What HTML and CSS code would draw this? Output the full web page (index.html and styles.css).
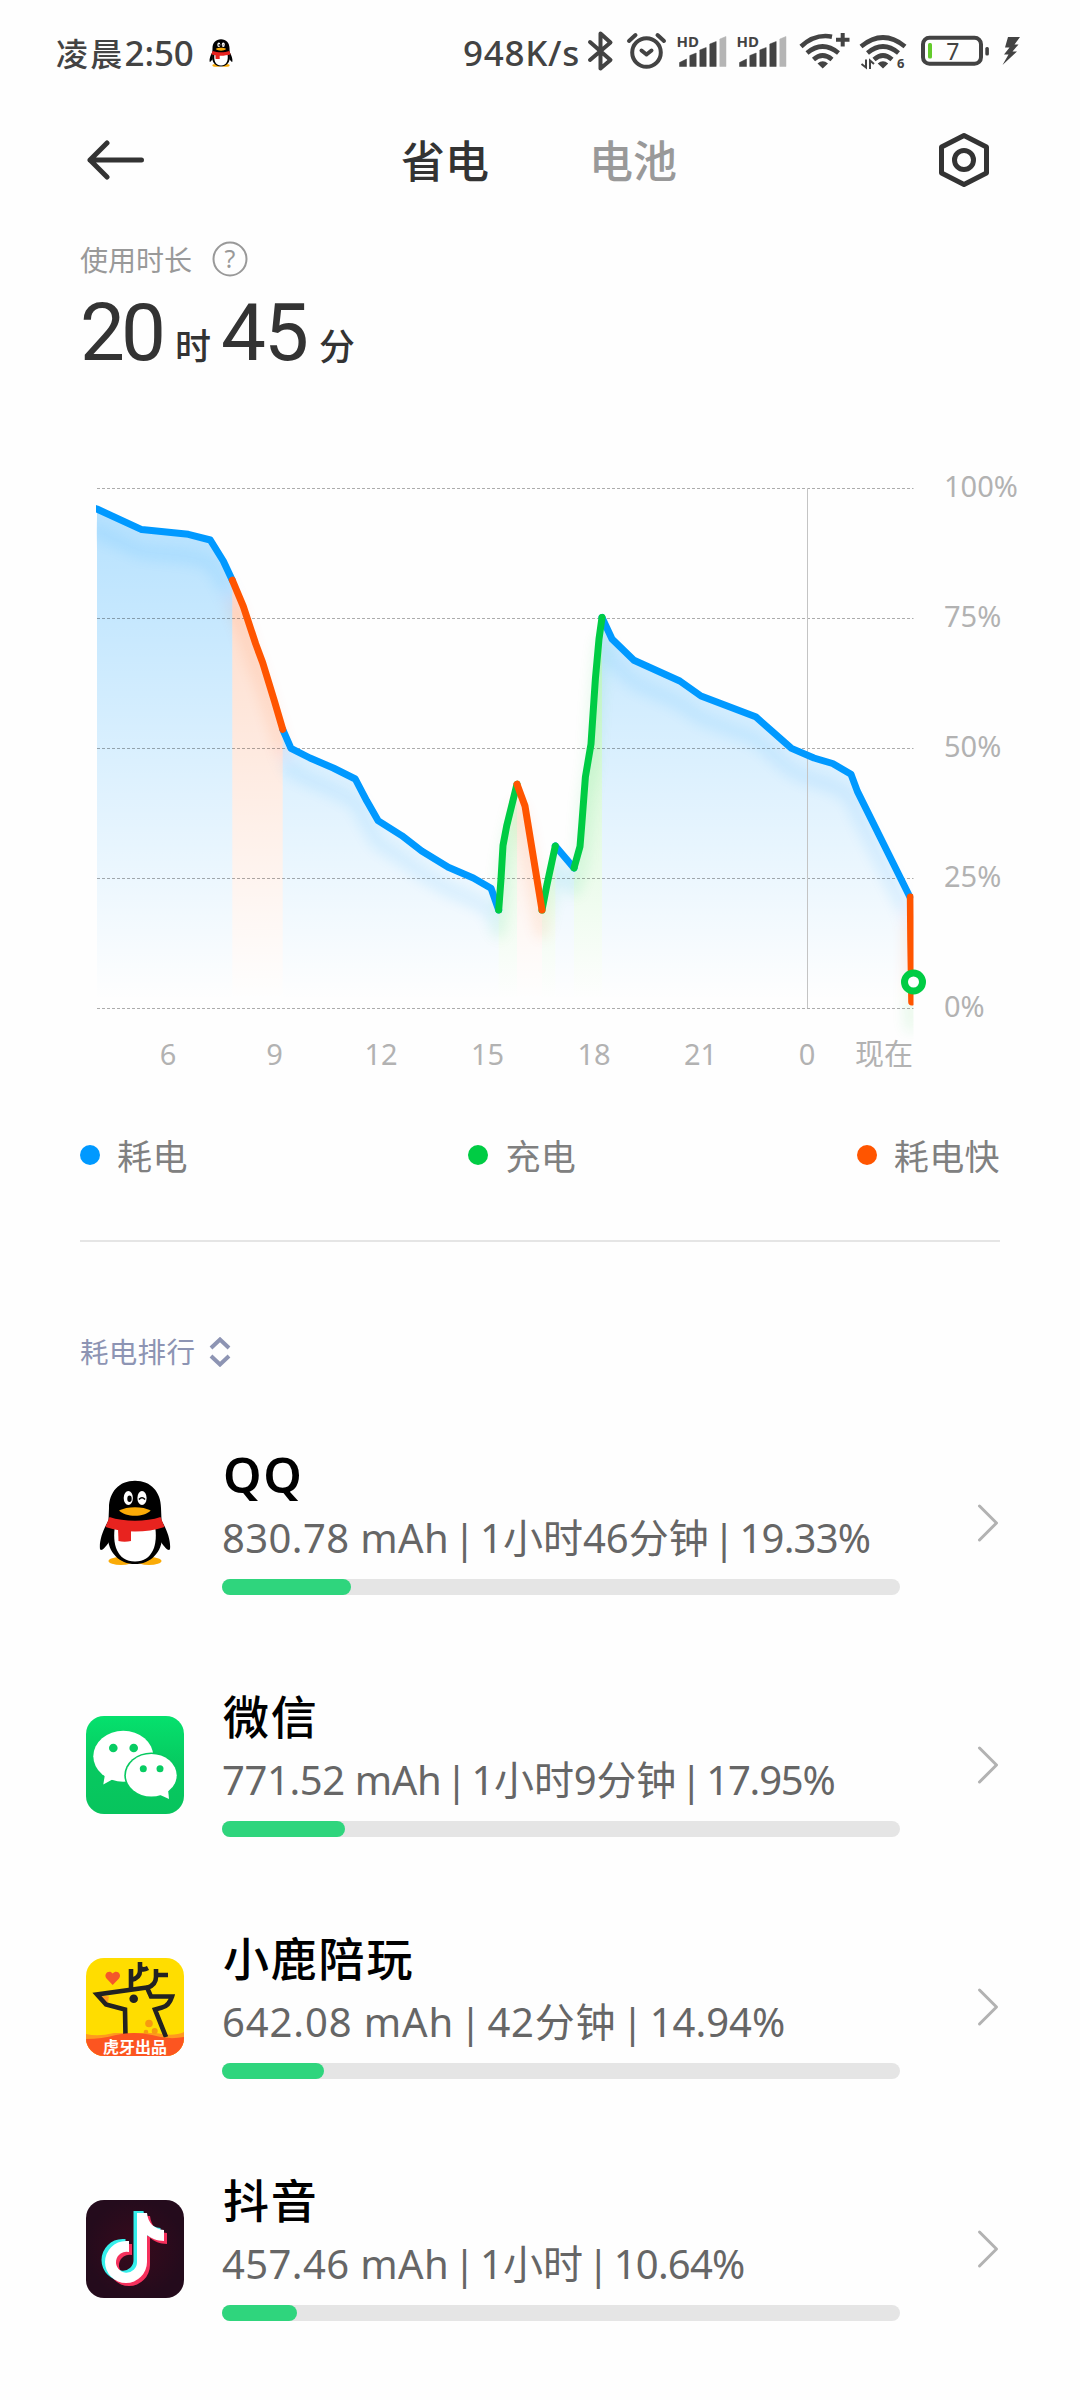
FILE: index.html
```html
<!DOCTYPE html>
<html lang="zh-CN">
<head>
    <meta charset="UTF-8">
    <meta name="viewport" content="width=device-width, initial-scale=1.0">
    <title>省电</title>
    <link rel="stylesheet" href="styles.css">
</head>
<body>
    <!-- shared shapes -->
    <svg class="defs" width="0" height="0">
        <symbol id="penguin" viewBox="0 0 98 98">
            <ellipse cx="35" cy="87" rx="12.5" ry="4" fill="#faab07"/>
            <ellipse cx="63" cy="87" rx="12.5" ry="4" fill="#faab07"/>
            <path d="M24 44C17 55 13 67 14 75C15 78 19 74 23 68ZM74 44C81 55 85 67 84 75C83 78 79 74 75 68Z" fill="#000"/>
            <path d="M49 6.7C33 6.7 23 18 23 34L22 58C20 76 32 90 49 90C66 90 78 76 76 58L75 34C75 18 65 6.7 49 6.7Z" fill="#000"/>
            <path d="M29 52C26 70 31 87.5 49 87.5C67 87.5 72 70 69 52Z" fill="#fff"/>
            <path d="M23.500 43C38 48 60 48 74.500 43L78.500 53C60 59 38 59 19.500 53Z" fill="#e8231f"/>
            <path d="M32 54H45V67C41 68 36 68 32.500 67Z" fill="#e8231f"/>
            <ellipse cx="42.300" cy="24" rx="4.600" ry="7" fill="#fff"/>
            <ellipse cx="56" cy="24" rx="4.600" ry="7" fill="#fff"/>
            <ellipse cx="43.500" cy="24.800" rx="2.200" ry="3.200" fill="#000"/>
            <path d="M53 25.500Q56 22 59 25.500" fill="none" stroke="#000" stroke-width="1.600"/>
            <path d="M33 36.500C41 32 57 32 64.700 36.500C58 43.500 40 43.500 33 36.500Z" fill="#faab07"/>
        </symbol>
        <symbol id="signal" viewBox="0 0 60 48">
            <path d="M2.500 37.500V33.500L9.500 30V37.500ZM12.800 37.500V26.500L19.200 24V37.500ZM22.800 37.500V21L29.200 18.500V37.500ZM32.800 37.500V15L39.200 12.500V37.500Z" fill="#434343" stroke="#434343" stroke-width=".5" stroke-linejoin="round"/>
            <path d="M42.800 37.500V10L49 7.500V37.500Z" fill="#b5b5b5" stroke="#b5b5b5" stroke-width=".5" stroke-linejoin="round"/>
        </symbol>
        <symbol id="chevron" viewBox="0 0 24 42">
            <path d="M3.500 4L20.500 21L3.500 38" fill="none" stroke="#b2b2b2" stroke-width="3" stroke-linecap="round" stroke-linejoin="round"/>
        </symbol>
    </svg>

    <div class="status-bar">
        <div class="clock"><span class="clock-cn">凌晨</span>2:50</div>
        <svg class="status-qq" width="32" height="32"><use href="#penguin"/></svg>
        <div class="speed">948K/s</div>
        <svg class="status-icons" width="448" height="48" viewBox="582 30 448 48">
            <!-- bluetooth -->
            <path d="M590 43L610.500 61L600.500 69.500V34.500L610.500 43.500L590 61" fill="none" stroke="#434343" stroke-width="4" stroke-linecap="round" stroke-linejoin="round"/>
            <!-- alarm -->
            <g fill="none" stroke="#434343" stroke-width="4" stroke-linecap="round" stroke-linejoin="round">
                <circle cx="646.500" cy="53.500" r="14.300"/>
                <path d="M629 42L635.500 36M664 42L657.500 36M641.500 51.500L646.500 55.500L651.500 51.500"/>
            </g>
            <use href="#signal" x="677" y="30" width="60" height="48"/>
            <use href="#signal" x="737" y="30" width="60" height="48"/>
            <text x="676.500" y="47.700" class="hd">HD</text>
            <text x="736.500" y="47.700" class="hd">HD</text>
            <!-- wifi -->
            <g fill="none" stroke="#434343" stroke-width="4.600">
                <path d="M801 47.500Q815 34.500 832 37.700M807 54Q822.500 41 838.500 54M813.500 60.500Q822.500 52.500 832 60.500"/>
                <path d="M842.700 34V47.500M836 40.700H849.500" stroke-width="4"/>
                <path d="M861 47.500Q883 29.500 905 47.500M867.500 54Q883 41 898.500 54M874 60.500Q883 52.500 892 60.500"/>
                <path d="M866 60.500V68.500L861.500 65M870 70V61.500L874 65" stroke-width="2"/>
            </g>
            <path d="M817.500 64.500Q822.700 60 828 64.500L822.700 69.500ZM877.700 64.500Q883 60 888.200 64.500L883 69.500Z" fill="#434343"/>
            <text x="897" y="69" class="wifi-six">6</text>
            <!-- battery -->
            <rect x="923" y="38.700" width="58" height="26" rx="6.500" fill="none" stroke="#434343" stroke-width="4"/>
            <rect x="985.300" y="48" width="3.600" height="8.600" rx="1.500" fill="#434343"/>
            <rect x="928" y="44" width="4" height="15.500" rx="1.500" fill="#63cb2b"/>
            <text x="952.800" y="60.500" class="battery-text">7</text>
            <path d="M1008 38H1020L1014.500 45.500H1018.500L1012.500 52.500H1017L1002.500 66L1008.500 55.500H1004L1009.500 48.500H1005Z" fill="#434343"/>
        </svg>
    </div>

    <div class="header">
        <svg width="60" height="44" viewBox="0 0 60 44" fill="none" stroke="#333" stroke-width="5" stroke-linecap="round" stroke-linejoin="round">
            <path d="M54.500 22H3M20 5L3 22L20 39"/>
        </svg>
        <div class="tabs">
            <span class="tab active">省电</span>
            <span class="tab">电池</span>
        </div>
        <svg width="54" height="58" viewBox="0 0 54 58" fill="none" stroke="#333" stroke-width="5" stroke-linejoin="round">
            <path d="M27 4.500L49.500 16V42L27 53.500L4.500 42V16Z"/>
            <circle cx="27" cy="29" r="9.500"/>
        </svg>
    </div>

    <div class="usage">
        <div class="usage-label">
            <span>使用时长</span>
            <svg width="36" height="36" viewBox="0 0 36 36">
                <circle cx="18" cy="18" r="16.500" fill="none" stroke="#999" stroke-width="2"/>
                <text x="18" y="27" class="help">?</text>
            </svg>
        </div>
        <div class="usage-time">
            <span class="num hours">20</span><span class="unit">时</span><span class="num minutes">45</span><span class="unit">分</span>
        </div>
    </div>

    <svg class="chart" width="960" height="630" viewBox="80 460 960 630">
        <defs>
            <linearGradient id="fillBlue" gradientUnits="userSpaceOnUse" x1="0" y1="500" x2="0" y2="1000">
                <stop offset="0" stop-color="#0099ff" stop-opacity=".29"/>
                <stop offset="1" stop-color="#0099ff" stop-opacity="0"/>
            </linearGradient>
            <linearGradient id="fillRed" gradientUnits="userSpaceOnUse" x1="0" y1="500" x2="0" y2="1000">
                <stop offset="0" stop-color="#ff5500" stop-opacity=".24"/>
                <stop offset="1" stop-color="#ff5500" stop-opacity="0"/>
            </linearGradient>
            <linearGradient id="fillGreen" gradientUnits="userSpaceOnUse" x1="0" y1="500" x2="0" y2="1000">
                <stop offset="0" stop-color="#22dd22" stop-opacity=".34"/>
                <stop offset="1" stop-color="#22dd22" stop-opacity="0"/>
            </linearGradient>
            <filter id="soft" filterUnits="userSpaceOnUse" x="80" y="470" width="960" height="620">
                <feGaussianBlur stdDeviation="7"/>
            </filter>
            <clipPath id="plot"><rect x="96" y="480" width="817.500" height="580"/></clipPath>
            <g id="line">
                <path stroke="#0099ff" d="M94 508L97 509L141.700 529.600L188.300 534.300L210.300 540L223.300 561L232.300 580.200"/>
                <path stroke="#0099ff" d="M282.700 729.300L291 748.300L310 758L333.300 768L355.300 779L366.700 800.800L378 820.600L401.700 835.600L421.700 851L448.300 867.300L473.300 878L491 888.200L498.700 910"/>
                <path stroke="#0099ff" d="M555.300 846L574 868"/>
                <path stroke="#0099ff" d="M602 617.500L612 639L633.900 660.200L679.800 681L701 696L755.600 716.700L791.500 748.400L814 758L832.600 763.500L851 774.200L857.400 791.400L889.900 856.800L909.900 897"/>
                <path stroke="#00cc44" d="M498.700 910L501 879L503 845.500L506.700 825.800L517 784.200M542 910L546.700 886L555.300 846M574 868L580 846.500L582 821.700L585.400 777L591 744L595.400 678.800L599 639L602 617.500"/>
                <path stroke="#ff5500" d="M232.300 580.200L243.300 606.300L255.700 643.900L262.700 662.800L274.700 702L282.700 729.300M517 784.200L525 806L542 910M910.300 897L910.700 940L911.700 1002"/>
            </g>
        </defs>

        <path fill="url(#fillBlue)" d="M97 1008V509L141.700 529.600L188.300 534.300L210.300 540L223.300 561L232.300 580.200V1008Z"/>
        <path fill="url(#fillRed)" d="M232.300 1008V580.200L243.300 606.300L255.700 643.900L262.700 662.800L274.700 702L282.700 729.300V1008Z"/>
        <path fill="url(#fillBlue)" d="M282.700 1008V729.300L291 748.300L310 758L333.300 768L355.300 779L366.700 800.800L378 820.600L401.700 835.600L421.700 851L448.300 867.300L473.300 878L491 888.200L498.700 910V1008Z"/>
        <path fill="url(#fillGreen)" d="M498.700 1008V910L503 845.500L506.700 825.800L517 784.200V1008Z"/>
        <path fill="url(#fillRed)" d="M517 1008V784.200L525 806L542 910V1008Z"/>
        <path fill="url(#fillGreen)" d="M542 1008V910L555.300 846V1008Z"/>
        <path fill="url(#fillBlue)" d="M555.300 1008V846L574 868V1008Z"/>
        <path fill="url(#fillGreen)" d="M574 1008V868L580 846.500L585.400 777L591 744L595.400 678.800L602 617.500V1008Z"/>
        <path fill="url(#fillBlue)" d="M602 1008V617.500L612 639L633.900 660.200L679.800 681L701 696L755.600 716.700L791.500 748.400L814 758L832.600 763.500L851 774.200L857.400 791.400L889.900 856.800L909.900 897V1008Z"/>

        <g clip-path="url(#plot)">
            <g class="shadow" filter="url(#soft)" transform="translate(0 22)">
                <use href="#line"/>
                <path d="M911 975V1004" stroke="#00cc44"/>
            </g>
        </g>

        <g class="grid">
            <path d="M97 488.500H913.500M97 618.500H913.500M97 748.500H913.500M97 878.500H913.500M97 1008.500H913.500"/>
        </g>
        <path d="M807.500 488V1008" stroke="#c4c4c4"/>

        <g class="line" clip-path="url(#plot)"><use href="#line"/></g>
        <circle cx="913.500" cy="982" r="9" fill="#fff" stroke="#00cc44" stroke-width="7"/>

        <g class="axis-y">
            <text x="944" y="497">100%</text>
            <text x="944" y="627">75%</text>
            <text x="944" y="757">50%</text>
            <text x="944" y="887">25%</text>
            <text x="944" y="1017">0%</text>
        </g>
        <g class="axis-x">
            <text x="168" y="1064.500">6</text>
            <text x="274.500" y="1064.500">9</text>
            <text x="381" y="1064.500">12</text>
            <text x="487.500" y="1064.500">15</text>
            <text x="594" y="1064.500">18</text>
            <text x="700.500" y="1064.500">21</text>
            <text x="807" y="1064.500">0</text>
            <text x="884" y="1065">现在</text>
        </g>
    </svg>

    <div class="legend">
        <div class="legend-item"><span class="dot blue"></span>耗电</div>
        <div class="legend-item"><span class="dot green"></span>充电</div>
        <div class="legend-item"><span class="dot red"></span>耗电快</div>
    </div>

    <div class="rank">
        <span>耗电排行</span>
        <svg width="22" height="30" viewBox="0 0 22 30" fill="none" stroke="#8d94b3" stroke-width="4">
            <path d="M2 11L11 2.500L20 11M2 19L11 27.500L20 19"/>
        </svg>
    </div>

    <div class="app-list">
        <div class="app">
            <svg class="app-icon" width="98" height="98"><use href="#penguin"/></svg>
            <div class="app-info">
                <div class="app-name latin">QQ</div>
                <div class="app-detail"><span class="mah">830.78 mAh</span> | 1小时46分钟 | <span class="percent">19.33%</span></div>
                <div class="bar"><div class="bar-fill" style="width: 129px"></div></div>
            </div>
            <svg class="arrow" width="24" height="42"><use href="#chevron"/></svg>
        </div>

        <div class="app">
            <svg class="app-icon" width="98" height="98" viewBox="0 0 98 98">
                <defs>
                    <linearGradient id="wechat" x1="0" y1="0" x2="0" y2="1">
                        <stop offset="0" stop-color="#05e16d"/>
                        <stop offset=".5" stop-color="#07c960"/>
                        <stop offset="1" stop-color="#07c45d"/>
                    </linearGradient>
                </defs>
                <rect width="98" height="98" rx="18" fill="url(#wechat)"/>
                <ellipse cx="37.300" cy="40.200" rx="30" ry="25.500" fill="#fff"/>
                <path d="M19 58L17.300 68.500L29 62Z" fill="#fff"/>
                <ellipse cx="65.300" cy="59.300" rx="27" ry="22.800" fill="#07c960"/>
                <ellipse cx="65.300" cy="59.300" rx="25.400" ry="21.300" fill="#fff"/>
                <path d="M82 73L83 83L72 78Z" fill="#fff"/>
                <g fill="#07cc62">
                    <circle cx="27.300" cy="32" r="4.300"/>
                    <circle cx="47.700" cy="32" r="4.300"/>
                    <circle cx="57.300" cy="52.700" r="3.500"/>
                    <circle cx="74" cy="52.700" r="3.500"/>
                </g>
            </svg>
            <div class="app-info">
                <div class="app-name">微信</div>
                <div class="app-detail narrow"><span class="mah">771.52 mAh</span> | 1小时9分钟 | <span class="percent">17.95%</span></div>
                <div class="bar"><div class="bar-fill" style="width: 123px"></div></div>
            </div>
            <svg class="arrow" width="24" height="42"><use href="#chevron"/></svg>
        </div>

        <div class="app">
            <svg class="app-icon rounded" width="98" height="98" viewBox="0 0 98 98">
                <rect width="98" height="98" fill="#ffdd00"/>
                <path d="M11 37L23 38.500L21.500 46Z" fill="#ff9a1f"/>
                <path d="M0 76Q12 79 28 75H70Q88 79 98 74V98H0Z" fill="#ff9a1f"/>
                <g fill="#f79a10">
                    <circle cx="63" cy="65.500" r="3.800"/>
                    <circle cx="68.700" cy="73" r="3"/>
                    <circle cx="60" cy="74" r="2.300"/>
                </g>
                <g fill="none" stroke="#222" stroke-width="4.600">
                    <path d="M39.500 78L39 51.500L20 46.500L11 36.500L61 29.500L65 38.500H86Q83 48 76 49.500L69 51.500L80 79"/>
                    <path d="M45 31V11M45 22Q54 20 54 13V4M54 9Q56 13 62 10M61 30Q70 27 70 19V11M70 17H82"/>
                </g>
                <circle cx="47.700" cy="40.700" r="4.300" fill="#222"/>
                <path d="M26.700 27L20.500 20.500C17 16 23 11 26.700 15.500C30.400 11 36.500 16 33 20.500Z" fill="#f4582a"/>
                <path d="M0 81Q16 81 30 77Q48 73 66 77Q82 82 98 79V98H0Z" fill="#fc5520"/>
                <text x="49" y="95" class="deer-text">虎牙出品</text>
            </svg>
            <div class="app-info">
                <div class="app-name">小鹿陪玩</div>
                <div class="app-detail wide"><span class="mah">642.08 mAh</span> | 42分钟 | <span class="percent">14.94%</span></div>
                <div class="bar"><div class="bar-fill" style="width: 102px"></div></div>
            </div>
            <svg class="arrow" width="24" height="42"><use href="#chevron"/></svg>
        </div>

        <div class="app">
            <svg class="app-icon" width="98" height="98" viewBox="0 0 98 98">
                <defs>
                    <radialGradient id="night">
                        <stop offset="0" stop-color="#380a1c"/>
                        <stop offset="1" stop-color="#240b1c"/>
                    </radialGradient>
                    <path id="note" d="M51 13H61C62 23 68 29 78 30V41C71 41 65 38 61 35V62A21 21 0 1 1 40 41L43 41V52A10.500 10.500 0 1 0 51 62Z"/>
                </defs>
                <rect width="98" height="98" rx="18" fill="url(#night)"/>
                <use href="#note" x="3" y="3" fill="#f5305c"/>
                <use href="#note" x="-3.500" y="-2" fill="#35efeb"/>
                <use href="#note" fill="#fff"/>
            </svg>
            <div class="app-info">
                <div class="app-name">抖音</div>
                <div class="app-detail"><span class="mah">457.46 mAh</span> | 1小时 | <span class="percent">10.64%</span></div>
                <div class="bar"><div class="bar-fill" style="width: 75px"></div></div>
            </div>
            <svg class="arrow" width="24" height="42"><use href="#chevron"/></svg>
        </div>
    </div>
</body>
</html>
```
FILE: styles.css
```css
body {
    font-family: "Noto Sans", "Noto Sans CJK SC", sans-serif;
    background-color: #fefefe;
    margin: 0;
    width: 1080px;
    height: 2400px;
    overflow: hidden;
}

svg {
    display: block;
    flex: none;
}

.defs {
    display: none;
}

/* status bar */
.status-bar {
    display: flex;
    align-items: center;
    height: 106px;
    padding-left: 56px;
    color: #434343;
}

.clock,
.speed {
    font-size: 35px;
    font-weight: 500;
    line-height: 48px;
    white-space: nowrap;
}

.clock {
    width: 149px;
    letter-spacing: -0.1px;
}

.clock-cn {
    font-size: 32px;
    letter-spacing: 2.3px;
}

.speed {
    width: 119px;
    margin-left: 226px;
    letter-spacing: 0.7px;
}

.hd {
    font-size: 15px;
    font-weight: 700;
    fill: #434343;
}

.wifi-six {
    font-size: 13px;
    font-weight: 700;
    fill: #434343;
}

.battery-text {
    font-size: 23px;
    text-anchor: middle;
    fill: #434343;
}

/* header */
.header {
    display: flex;
    align-items: center;
    justify-content: space-between;
    height: 108px;
    padding: 0 89px 0 87px;
}

.tabs {
    display: flex;
    gap: 100px;
    margin: 2px 6px 0 0;
}

.tab {
    font-size: 44px;
    font-weight: 500;
    line-height: 60px;
    color: #999;
}

.tab.active {
    color: #333;
}

/* usage time */
.usage {
    height: 246px;
    padding: 27px 80px 0;
    box-sizing: border-box;
}

.usage-label {
    display: flex;
    align-items: center;
    gap: 20px;
    height: 36px;
    font-size: 28px;
    color: #999;
}

.help {
    font-size: 25px;
    text-anchor: middle;
    fill: #999;
}

.usage-time {
    display: flex;
    align-items: baseline;
    height: 100px;
    margin-top: 6px;
    line-height: 100px;
    color: #333;
}

.num {
    font-family: Roboto, sans-serif;
    font-size: 80px;
}

.hours {
    width: 95px;
    letter-spacing: -4px;
}

.minutes {
    width: 98px;
    letter-spacing: -2px;
}

.unit {
    width: 46px;
    font-size: 36px;
    font-weight: 500;
}

/* chart */
.chart {
    margin-left: 80px;
}

.chart .line,
.chart .shadow {
    fill: none;
    stroke-width: 7;
    stroke-linecap: round;
    stroke-linejoin: round;
}

.chart .shadow {
    stroke-width: 12;
    opacity: 0.11;
}

.grid {
    stroke: #000;
    stroke-opacity: 0.32;
    stroke-dasharray: 3 2;
}

.axis-y,
.axis-x {
    font-size: 29px;
    fill: #b2b2b2;
}

.axis-x {
    text-anchor: middle;
}

/* legend */
.legend {
    display: flex;
    justify-content: space-between;
    margin: 0 80px;
    padding: 38px 0 60px;
    border-bottom: 2px solid #e5e5e5;
}

.legend-item {
    display: flex;
    align-items: center;
    gap: 17px;
    height: 52px;
    font-size: 35px;
    letter-spacing: 0.4px;
    color: #808080;
}

.dot {
    width: 20px;
    height: 20px;
    margin-top: 2px;
    border-radius: 50%;
}

.blue {
    background-color: #0099ff;
}

.green {
    background-color: #00cc44;
}

.red {
    background-color: #ff5500;
}

.rank {
    display: flex;
    align-items: center;
    gap: 14px;
    height: 40px;
    margin: 90px 80px 30px;
    font-size: 28.5px;
    line-height: 40px;
    letter-spacing: 0.3px;
    color: #8d94b3;
}

.rank span {
    margin-top: -1px;
}

/* app list */
.app {
    display: flex;
    align-items: center;
    height: 242px;
    padding: 0 80px 0 86px;
}

.rounded {
    border-radius: 18px;
}

.app-info {
    width: 678px;
    height: 144px;
    margin-left: 38px;
}

.app-name {
    height: 60px;
    margin-top: -7px;
    font-size: 46px;
    font-weight: 500;
    line-height: 60px;
    letter-spacing: 1.8px;
    text-indent: 1px;
    color: #000;
}

.app-name.latin {
    font-size: 49px;
    font-weight: 600;
}

.app-detail {
    height: 75px;
    font-size: 40px;
    line-height: 68px;
    white-space: nowrap;
    word-spacing: -6px;
    color: #666;
}

.mah {
    letter-spacing: 0.4px;
    word-spacing: 0;
}

.percent {
    letter-spacing: -0.8px;
}

/* rows whose digits run wider or narrower */
.wide {
    letter-spacing: 0.8px;
}

.wide .mah {
    letter-spacing: 0.9px;
}

.wide .percent {
    letter-spacing: 0;
}

.narrow {
    letter-spacing: -0.2px;
}

.narrow .mah {
    letter-spacing: -0.4px;
}

.narrow .percent {
    letter-spacing: -1.2px;
}

.bar {
    height: 16px;
    border-radius: 8px;
    background-color: #e5e5e5;
}

.bar-fill {
    height: 16px;
    border-radius: 8px;
    background-color: #2fd57d;
}

.arrow {
    margin-left: 76px;
}

.deer-text {
    font-size: 16px;
    font-weight: 700;
    text-anchor: middle;
    fill: #fff;
}
```
